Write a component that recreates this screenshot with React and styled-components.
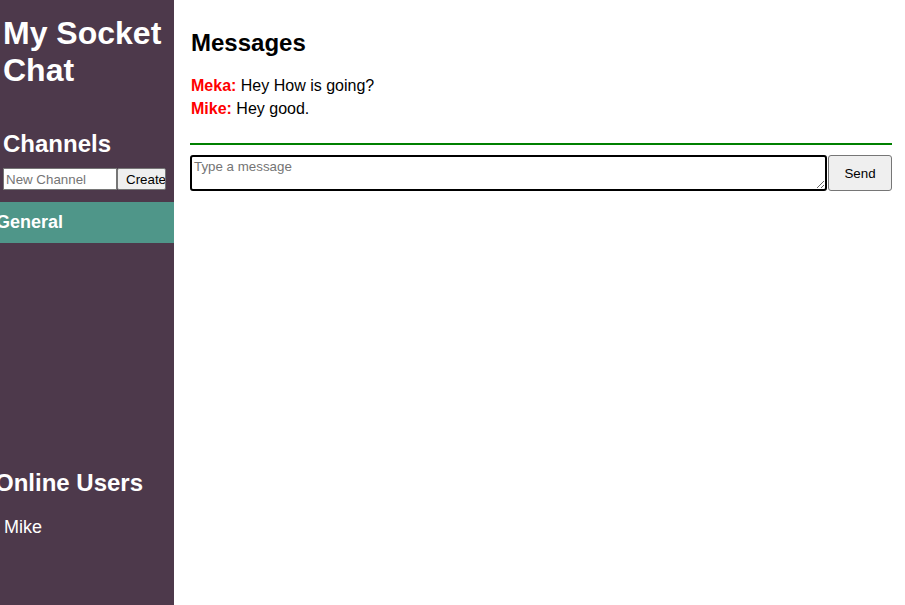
import React from "react";
import styled, { createGlobalStyle } from "styled-components";

const Global = createGlobalStyle`
  html, body { margin: 0; padding: 0; }
  body { font-family: "Liberation Sans", Arial, sans-serif; background: #fff; color: #000; }
  * { box-sizing: border-box; }
`;

const Layout = styled.div`
  display: flex;
  height: 100vh;
  width: 100%;
  overflow: hidden;
`;

const Sidebar = styled.aside`
  width: 174px;
  flex: 0 0 174px;
  background: #4d394b;
  color: #fff;
  display: flex;
  flex-direction: column;
  padding: 0 0 67px 3px;
  overflow: hidden;
`;

const Title = styled.h1`
  font-size: 32px;
  line-height: 37px;
  font-weight: bold;
  margin: 15px 0 0 0;
`;

const SectionHeading = styled.h2`
  font-size: 24px;
  line-height: 28px;
  font-weight: bold;
  margin: ${(p) => p.$mt || 0}px 0 0 ${(p) => p.$ml || 0}px;
  white-space: nowrap;
`;

const ChannelForm = styled.form`
  display: flex;
  margin-top: 10px;
  height: 22px;
`;

const ChannelInput = styled.input`
  width: 114px;
  height: 22px;
  border: 1px solid #767676;
  background: #fff;
  font-family: "Liberation Sans", Arial, sans-serif;
  font-size: 13.33px;
  padding: 1px 2px;
  margin: 0;
  &::placeholder { color: #757575; }
`;

const SmallButton = styled.button`
  width: 49px;
  height: 22px;
  margin: 0;
  padding: 0 0 0 8px;
  text-align: left;
  white-space: nowrap;
  overflow: hidden;
  border: 1px solid #767676;
  border-radius: 2px;
  background: #efefef;
  color: #000;
  font-family: "Liberation Sans", Arial, sans-serif;
  font-size: 13.33px;
`;

const ChannelList = styled.ul`
  list-style: none;
  margin: 12px 0 0 -3px;
  padding: 0;
  flex: 1;
`;

const ChannelItem = styled.li`
  height: 41px;
  line-height: 41px;
  font-size: 18px;
  font-weight: bold;
  text-indent: -4px;
  background: ${(p) => (p.$active ? "#4f9689" : "transparent")};
  color: #fff;
`;

const UserItem = styled.div`
  font-size: 18px;
  line-height: 21px;
  margin-top: 20px;
  padding-left: 1px;
`;

const Main = styled.main`
  flex: 1;
  padding: 29px 13px 0 16px;
  display: flex;
  flex-direction: column;
`;

const MainHeading = styled.h2`
  font-size: 24px;
  line-height: 28px;
  font-weight: bold;
  margin: 0;
  padding-left: 1px;
`;

const MessageList = styled.div`
  margin-top: 17px;
  padding-bottom: 23px;
  border-bottom: 2px solid #008000;
`;

const MessageLine = styled.div`
  font-size: 16px;
  line-height: 23px;
  padding-left: 1px;
`;

const Author = styled.strong`
  color: #ff0000;
  font-weight: bold;
`;

const SendForm = styled.form`
  display: flex;
  gap: 1px;
  margin-top: 10px;
  height: 36px;
`;

const MessageArea = styled.textarea`
  flex: 1;
  height: 36px;
  margin: 0;
  padding: 2px;
  border: 2px solid #000;
  border-radius: 3px;
  font-family: "Liberation Sans", Arial, sans-serif;
  font-size: 13.33px;
  resize: vertical;
  &::placeholder { color: #757575; }
`;

const SendButton = styled.button`
  width: 64px;
  height: 36px;
  margin: 0;
  border: 1px solid #767676;
  border-radius: 3px;
  background: #efefef;
  color: #000;
  font-family: "Liberation Sans", Arial, sans-serif;
  font-size: 13.33px;
`;

const messages = [
  { user: "Meka", text: "Hey How is going?" },
  { user: "Mike", text: "Hey good." },
];

export default function App() {
  return (
    <>
      <Global />
      <Layout>
        <Sidebar>
          <Title>My Socket Chat</Title>
          <SectionHeading $mt={41}>Channels</SectionHeading>
          <ChannelForm onSubmit={(e) => e.preventDefault()}>
            <ChannelInput placeholder="New Channel" />
            <SmallButton type="submit">Create</SmallButton>
          </ChannelForm>
          <ChannelList>
            <ChannelItem $active>General</ChannelItem>
          </ChannelList>
          <SectionHeading $ml={-8}>Online Users</SectionHeading>
          <UserItem>Mike</UserItem>
        </Sidebar>
        <Main>
          <MainHeading>Messages</MainHeading>
          <MessageList>
            {messages.map((m, i) => (
              <MessageLine key={i}>
                <Author>{m.user}:</Author> {m.text}
              </MessageLine>
            ))}
          </MessageList>
          <SendForm onSubmit={(e) => e.preventDefault()}>
            <MessageArea placeholder="Type a message" />
            <SendButton type="submit">Send</SendButton>
          </SendForm>
        </Main>
      </Layout>
    </>
  );
}
